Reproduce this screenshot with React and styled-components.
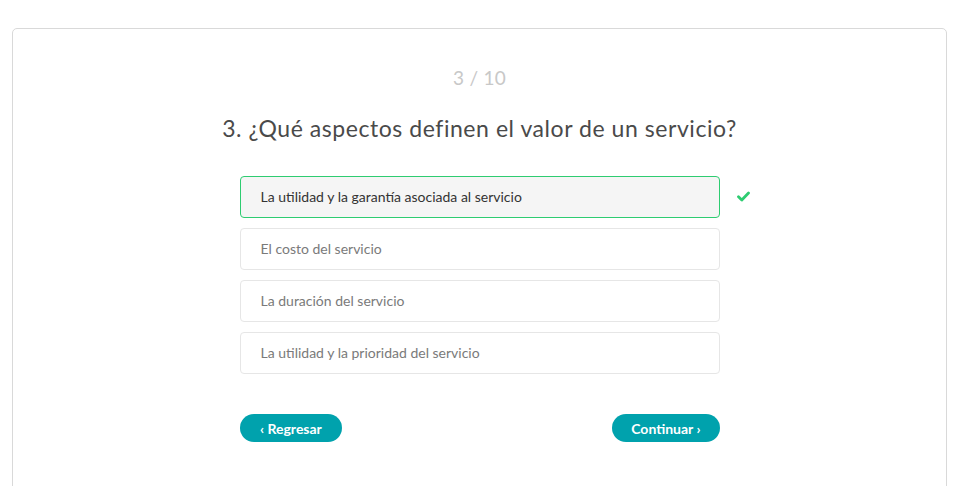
import React, { useState } from "react";
import styled, { createGlobalStyle } from "styled-components";

const GlobalStyle = createGlobalStyle`
  html, body {
    margin: 0;
    background: #ffffff;
    font-family: "Lato", "Liberation Sans", sans-serif;
  }
`;

const Page = styled.div`
  padding: 28px 8px 0 12px;
  height: 486px;
  box-sizing: border-box;
  overflow: hidden;
`;

const Card = styled.div`
  border: 1px solid #d9d9d9;
  border-radius: 5px;
  height: 480px;
  box-sizing: border-box;
  display: flex;
  flex-direction: column;
  align-items: center;
  padding-top: 36px;
`;

const Counter = styled.div`
  font-size: 19px;
  color: #c8c8c8;
  line-height: 26px;
  letter-spacing: 0.3px;
`;

const Question = styled.h2`
  margin: 23px 0 0;
  font-size: 23px;
  font-weight: 400;
  color: #4a4a4a;
  line-height: 28px;
  letter-spacing: 0.55px;
`;

const Options = styled.div`
  width: 480px;
  margin-top: 34px;
  display: flex;
  flex-direction: column;
  gap: 10px;
`;

const OptionRow = styled.div`
  position: relative;
`;

const Option = styled.div`
  height: 42px;
  box-sizing: border-box;
  border: 1px solid ${(p) => (p.$selected ? "#2ecc71" : "#e6e6e6")};
  background: ${(p) => (p.$selected ? "#f5f5f5" : "#ffffff")};
  border-radius: 4px;
  padding: 0 20px 2px;
  display: flex;
  align-items: center;
  font-size: 14px;
  color: ${(p) => (p.$selected ? "#333333" : "#7a7a7a")};
  cursor: pointer;
`;

const Check = styled.span`
  position: absolute;
  left: 497px;
  top: 15px;
  display: flex;
`;

const Actions = styled.div`
  width: 480px;
  margin-top: 40px;
  display: flex;
  justify-content: space-between;
`;

const Button = styled.button`
  height: 28px;
  border: none;
  border-radius: 14px;
  background: #00a2ad;
  color: #ffffff;
  font-family: "Lato", "Liberation Sans", sans-serif;
  font-weight: 700;
  font-size: 14px;
  padding: 0 ${(p) => p.$pad || "19px"};
  cursor: pointer;
`;

const answers = [
  "La utilidad y la garantía asociada al servicio",
  "El costo del servicio",
  "La duración del servicio",
  "La utilidad y la prioridad del servicio",
];

export default function App() {
  const [selected, setSelected] = useState(0);
  return (
    <>
      <GlobalStyle />
      <Page>
        <Card>
          <Counter>3 / 10</Counter>
          <Question>3. ¿Qué aspectos definen el valor de un servicio?</Question>
          <Options>
            {answers.map((a, i) => (
              <OptionRow key={a}>
                <Option $selected={selected === i} onClick={() => setSelected(i)}>
                  {a}
                </Option>
                {selected === i && (
                  <Check>
                    <svg width="13" height="11" viewBox="0 0 13 11">
                      <path
                        d="M1.5 5.8 L4.8 9 L11.5 2"
                        fill="none"
                        stroke="#2ecc71"
                        strokeWidth="2.8"
                        strokeLinecap="round"
                        strokeLinejoin="round"
                      />
                    </svg>
                  </Check>
                )}
              </OptionRow>
            ))}
          </Options>
          <Actions>
            <Button $pad="20.5px">‹ Regresar</Button>
            <Button>Continuar ›</Button>
          </Actions>
        </Card>
      </Page>
    </>
  );
}
